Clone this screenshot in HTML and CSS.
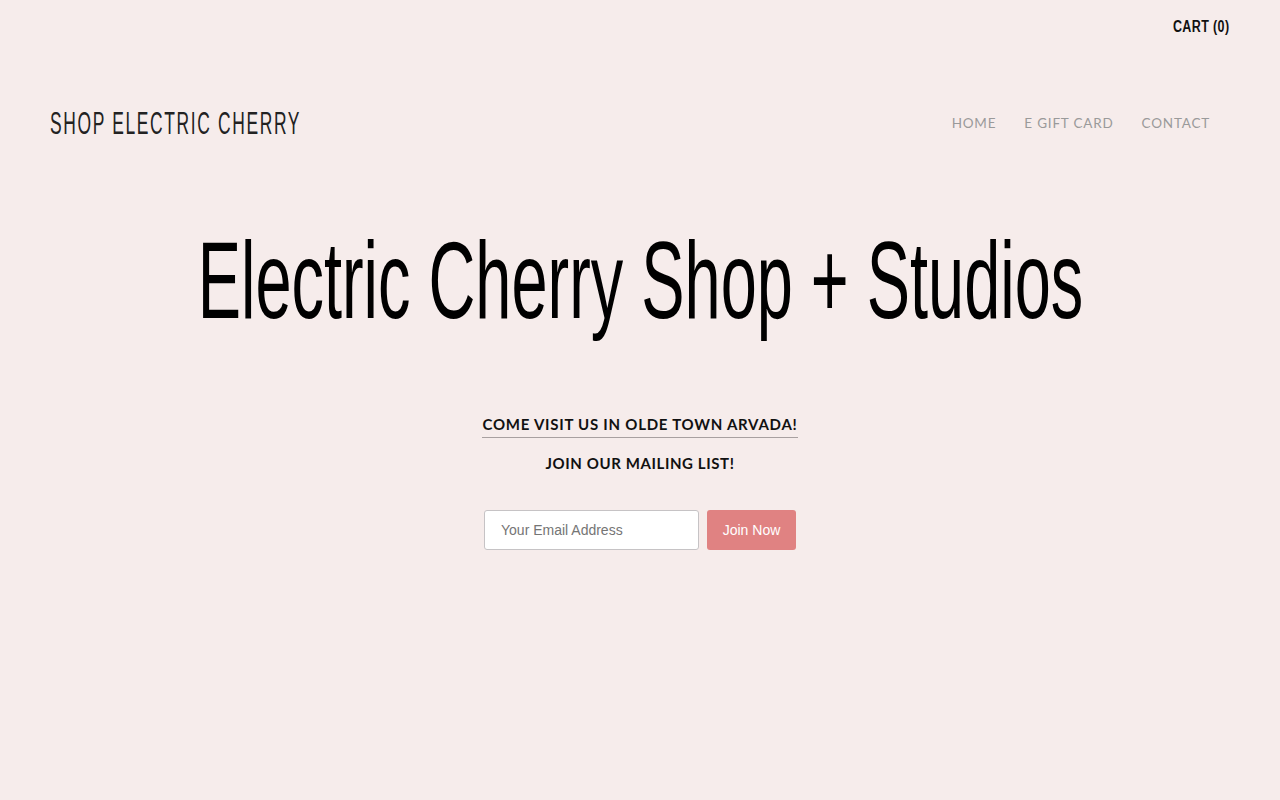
FILE: index.html
```html
<!DOCTYPE html>
<html lang="en">
<head>
<meta charset="utf-8">
<title>Shop Electric Cherry</title>
<link rel="stylesheet" href="styles.css">
</head>
<body>
<div class="page">
  <div class="topbar">
    <a class="cart" href="#"><span class="cart-text">CART (0)</span></a>
  </div>
  <header class="header">
    <a class="logo" href="#"><span class="logo-text">SHOP ELECTRIC CHERRY</span></a>
    <nav class="nav">
      <a href="#">HOME</a>
      <a href="#">E GIFT CARD</a>
      <a href="#">CONTACT</a>
    </nav>
  </header>
  <main class="main">
    <h1 class="hero"><span class="hero-text">Electric Cherry Shop + Studios</span></h1>
    <a class="visit" href="#">COME VISIT US IN OLDE TOWN ARVADA!</a>
    <p class="mailing">JOIN OUR MAILING LIST!</p>
    <form class="signup">
      <input class="email" type="text" placeholder="Your Email Address">
      <button class="join" type="button">Join Now</button>
    </form>
  </main>
</div>
</body>
</html>
```

FILE: styles.css
```css
html, body {
  margin: 0;
  padding: 0;
  background: #f6eceb;
}
body {
  font-family: "Lato", "Liberation Sans", sans-serif;
  color: #111;
  overflow: hidden;
}
a { text-decoration: none; color: inherit; }
.page {
  display: flex;
  flex-direction: column;
  min-height: 800px;
  width: 1280px;
  overflow: hidden;
}
.topbar {
  display: flex;
  justify-content: flex-end;
  padding: 18px 51px 0 0;
  height: 27px;
}
.cart {
  font-family: "Liberation Sans Narrow", "Liberation Sans", sans-serif;
  font-weight: bold;
  font-size: 16px;
  letter-spacing: 0.5px;
  color: #111;
}
.cart-text {
  display: inline-block;
  transform: scaleX(0.78);
  transform-origin: right center;
}
.header {
  display: flex;
  justify-content: space-between;
  align-items: center;
  padding: 0 70px 0 50px;
  margin-top: 48px;
  height: 60px;
}
.logo {
  font-family: "Liberation Sans Narrow", "Liberation Sans", sans-serif;
  font-size: 32px;
  letter-spacing: 3px;
  color: #222;
  width: 260px;
}
.logo-text {
  display: inline-block;
  transform: scaleX(0.545);
  transform-origin: left center;
  white-space: nowrap;
}
.nav {
  display: flex;
  gap: 28px;
}
.nav a {
  font-family: "Lato", sans-serif;
  font-size: 13.5px;
  letter-spacing: 0.8px;
  color: #9a9a9a;
}
.main {
  display: flex;
  flex-direction: column;
  align-items: center;
}
.hero {
  margin: 62px 0 0;
  width: 100%;
  display: flex;
  justify-content: center;
  overflow: hidden;
  font-family: "Liberation Sans Narrow", "Liberation Sans", sans-serif;
  font-weight: normal;
  font-size: 110px;
  line-height: 130px;
  color: #000;
  white-space: nowrap;
}
.hero-text {
  display: inline-block;
  flex: none;
  transform: scaleX(0.59);
  transform-origin: center center;
}
.visit {
  margin-top: 70px;
  font-family: "Lato", sans-serif;
  font-weight: bold;
  font-size: 15px;
  letter-spacing: 0.75px;
  color: #111;
  border-bottom: 1px solid #a8a0a0;
  padding-bottom: 4px;
}
.mailing {
  margin: 16px 0 0;
  font-family: "Lato", sans-serif;
  font-weight: bold;
  font-size: 15px;
  letter-spacing: 0.6px;
  color: #111;
}
.signup {
  display: flex;
  gap: 8px;
  margin-top: 38px;
}
.email {
  box-sizing: border-box;
  width: 215px;
  height: 40px;
  border: 1px solid #c6c3c5;
  border-radius: 3px;
  background: #fff;
  padding: 0 16px;
  font-family: "Liberation Sans", sans-serif;
  font-size: 14px;
  color: #333;
}
.email::placeholder { color: #757575; }
.join {
  box-sizing: border-box;
  width: 89px;
  height: 40px;
  border: none;
  border-radius: 3px;
  background: #e08282;
  color: #fff;
  font-family: "Liberation Sans", sans-serif;
  font-size: 14px;
}
```
